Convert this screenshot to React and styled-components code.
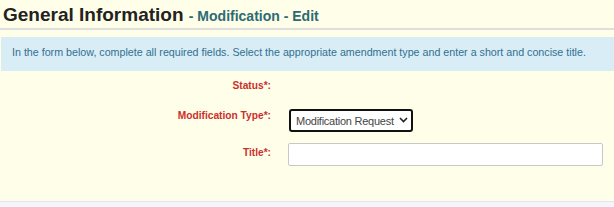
import React from "react";
import styled, { createGlobalStyle } from "styled-components";

const Global = createGlobalStyle`
  html, body { margin: 0; padding: 0; background: #f4f4fb; }
  body { font-family: "Liberation Sans", Arial, sans-serif; }
`;

const Page = styled.div`
  width: 614px;
  height: 207px;
  display: flex;
  flex-direction: column;
  background: #f4f4fb;
`;

const Panel = styled.div`
  background: #fffee9;
  height: 202px;
  border-bottom: 1px solid #e4e4ee;
  box-sizing: border-box;
  display: flex;
  flex-direction: column;
`;

const Header = styled.h2`
  margin: 0 0 7px 0;
  padding: 4px 0 0 3px;
  height: 30px;
  box-sizing: border-box;
  font-size: 19px;
  font-weight: bold;
  color: #222;
  line-height: 22px;
  border-bottom: 2px solid #dedede;
`;

const Sub = styled.span`
  font-size: 14px;
  color: #2c6b74;
`;

const Info = styled.div`
  background: #d9edf7;
  color: #31708f;
  font-size: 10.7px;
  height: 34px;
  box-sizing: border-box;
  padding: 9px 0 0 11px;
  margin-left: 1px;
  white-space: nowrap;
`;

const Form = styled.div`
  display: grid;
  grid-template-columns: 271px 1fr;
  column-gap: 17px;
  padding-top: 8px;
`;

const Label = styled.label`
  text-align: right;
  color: #c9302c;
  font-weight: bold;
  font-size: 10.2px;
  height: ${(p) => p.$h}px;
  line-height: ${(p) => p.$lh}px;
`;

const Field = styled.div`
  height: ${(p) => p.$h}px;
  display: flex;
  align-items: flex-start;
`;

const SelectWrap = styled.div`
  position: relative;
  margin-left: 1px;
  width: 124px;
  height: 23px;
`;

const Select = styled.select`
  appearance: none;
  -webkit-appearance: none;
  width: 124px;
  height: 23px;
  box-sizing: border-box;
  font-family: "Liberation Sans", Arial, sans-serif;
  font-size: 11px;
  letter-spacing: -0.25px;
  color: #444;
  border: 2px solid #111;
  border-radius: 3px;
  background: #fff;
  padding: 0 0 0 5px;
  outline: none;
`;

const Chevron = styled.svg`
  position: absolute;
  right: 5px;
  top: 8px;
  width: 9px;
  height: 6px;
  pointer-events: none;
`;

const Input = styled.input`
  width: 315px;
  height: 23px;
  box-sizing: border-box;
  border: 1px solid #c8c8c8;
  border-radius: 2px;
  background: #fff;
`;

export default function App() {
  return (
    <Page>
      <Global />
      <Panel>
        <Header>
          General Information <Sub>- Modification - Edit</Sub>
        </Header>
        <Info>
          In the form below, complete all required fields. Select the appropriate amendment type and enter a short and concise title.
        </Info>
        <Form>
          <Label $h={30} $lh={14}>Status*:</Label>
          <Field $h={30} />
          <Label $h={34} $lh={14}>Modification Type*:</Label>
          <Field $h={34}>
            <SelectWrap>
              <Select defaultValue="Modification Request">
                <option>Modification Request</option>
              </Select>
              <Chevron viewBox="0 0 9 6">
                <path d="M1 1 L4.5 4.5 L8 1" fill="none" stroke="#222" strokeWidth="1.6" />
              </Chevron>
            </SelectWrap>
          </Field>
          <Label $h={28} $lh={20}>Title*:</Label>
          <Field $h={28}>
            <Input type="text" />
          </Field>
        </Form>
      </Panel>
    </Page>
  );
}
